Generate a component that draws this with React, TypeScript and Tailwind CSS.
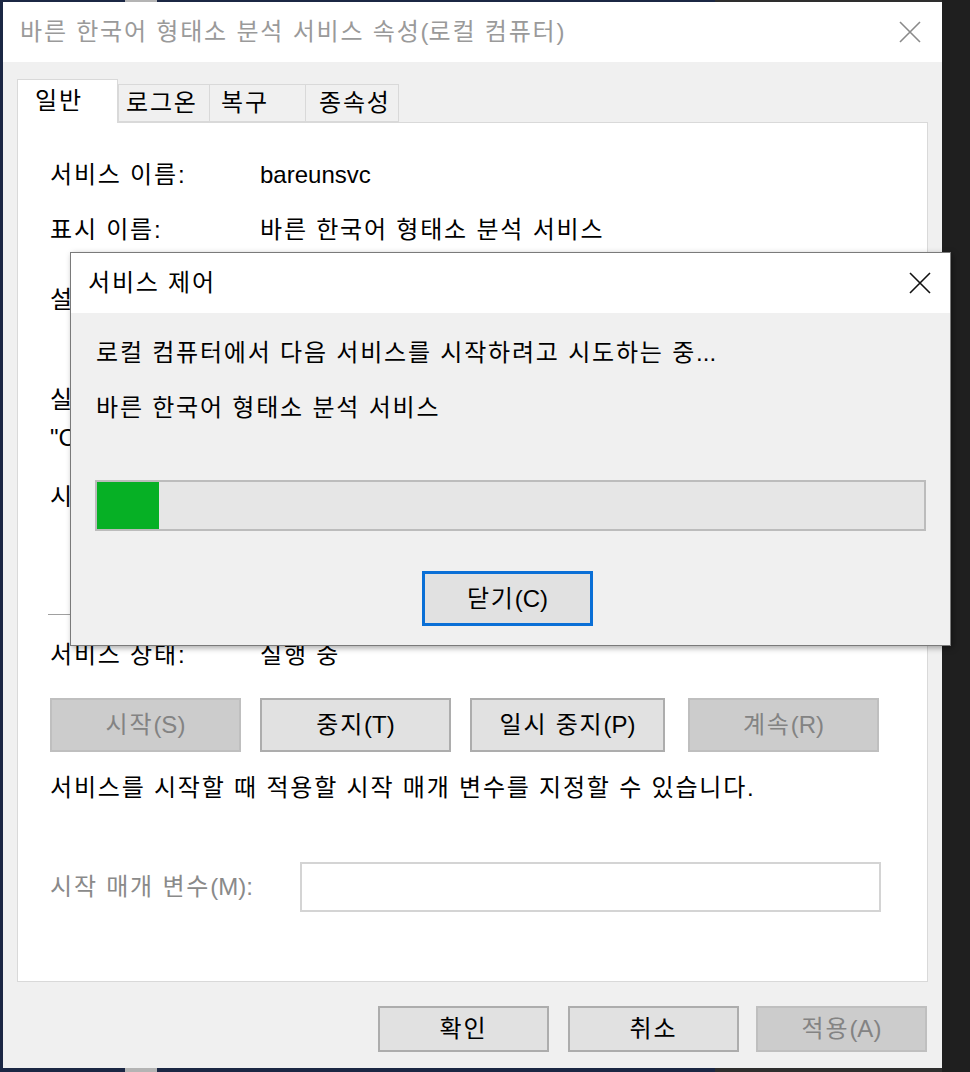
import React from 'react'

const font = { fontFamily: '"Liberation Sans", "Noto Sans CJK KR", sans-serif' }

function CloseIcon({ color }: { color: string }) {
  return (
    <svg width="24" height="24" viewBox="0 0 24 24" fill="none" stroke={color} strokeWidth="1.6">
      <path d="M2 2 L22 22 M22 2 L2 22" />
    </svg>
  )
}

// latin bits keep normal spacing; hangul gets wider tracking like Malgun Gothic
function L({ children }: { children: React.ReactNode }) {
  return <span className="tracking-normal">{children}</span>
}

function Btn({ label, w, disabled, focused }: { label: React.ReactNode; w: string; disabled?: boolean; focused?: boolean }) {
  const base = 'flex items-center justify-center leading-none '
  if (disabled) {
    return <div className={base + w + ' h-full bg-[#cccccc] border-2 border-[#bfbfbf] text-[#838383]'}>{label}</div>
  }
  if (focused) {
    return <div className={base + w + ' h-full bg-[#e1e1e1] border-[3px] border-[#0a6fd6] text-black'}>{label}</div>
  }
  return <div className={base + w + ' h-full bg-[#e1e1e1] border-2 border-[#adadad] text-black'}>{label}</div>
}

function Row({ label, value, className }: { label: React.ReactNode; value: React.ReactNode; className?: string }) {
  return (
    <div className={'flex h-[30px] items-center ' + (className ?? '')}>
      <div className="w-[210px] shrink-0">{label}</div>
      <div>{value}</div>
    </div>
  )
}

export default function App() {
  return (
    <div className="flex w-[970px] h-[1072px] overflow-hidden bg-[#1b2744] pl-[3px] text-[24px] tracking-[1.8px] text-black relative" style={font}>
      <div className="pt-[2px] pb-[4px] w-[939px] shrink-0 bg-[linear-gradient(to_right,#1b2744_122px,#b4b4b4_122px,#b4b4b4_154px,#1b2744_154px,#1b2744_712px,#2e2e2e_712px)]">
        <div className="flex flex-col h-full w-full bg-[#f0f0f0]">
          {/* title bar */}
          <div className="h-[60px] bg-white flex items-center justify-between pl-[17px] pr-[20px] text-[#9a9a9a]">
            <span>바른 한국어 형태소 분석 서비스 속성<L>(</L>로컬 컴퓨터<L>)</L></span>
            <CloseIcon color="#8a8a8a" />
          </div>

          <div className="flex flex-col flex-1 px-[14px] pt-[17px] pb-[16px]">
            {/* tabs */}
            <div className="flex items-end h-[43px]">
              <div className="h-[44px] w-[101px] bg-white border border-b-0 border-[#d9d9d9] pl-[17px] pt-[3px] relative z-10 -mb-px">일반</div>
              <div className="h-[38px] w-[92px] border border-[#d9d9d9] pl-[7px] flex items-center">로그온</div>
              <div className="h-[38px] w-[96px] border border-l-0 border-[#d9d9d9] pl-[11px] flex items-center">복구</div>
              <div className="h-[38px] w-[93px] border border-l-0 border-[#d9d9d9] pl-[13px] flex items-center">종속성</div>
            </div>

            {/* panel */}
            <div className="h-[860px] bg-white border border-[#d9d9d9] flex flex-col pl-[32px] pr-[41px]">
              <Row label={<>서비스 이름<L>:</L></>} value={<L>bareunsvc</L>} className="mt-[37px]" />
              <Row label={<>표시 이름<L>:</L></>} value="바른 한국어 형태소 분석 서비스" className="mt-[25px]" />
              <Row label={<>설명<L>:</L></>} value="바른 한국어 형태소 분석 서비스" className="mt-[40px]" />
              <div className="h-[30px] flex items-center mt-[70px]">실행 파일 경로<L>:</L></div>
              <div className="h-[30px] flex items-center mt-[8px]"><L>"C:\Program Files\Bareun\bin\bareun.exe"</L></div>
              <Row label={<>시작 유형<L>:</L></>} value="자동" className="mt-[29px]" />
              <div className="h-px bg-[#a0a0a0] mt-[102px] -ml-[2px]" />
              <Row label={<>서비스 상태<L>:</L></>} value="실행 중" className="mt-[25px]" />

              <div className="flex h-[54px] mt-[28px]">
                <Btn label={<>시작<L>(S)</L></>} w="w-[191px]" disabled />
                <div className="w-[19px]" />
                <Btn label={<>중지<L>(T)</L></>} w="w-[191px]" />
                <div className="w-[19px]" />
                <Btn label={<>일시 중지<L>(P)</L></>} w="w-[195px]" />
                <div className="w-[23px]" />
                <Btn label={<>계속<L>(R)</L></>} w="w-[191px]" disabled />
              </div>

              <div className="h-[30px] flex items-center mt-[21px]">서비스를 시작할 때 적용할 시작 매개 변수를 지정할 수 있습니다<L>.</L></div>

              <div className="flex items-center h-[50px] mt-[59px]">
                <div className="w-[250px] shrink-0 text-[#8a8a8a]">시작 매개 변수<L>(M):</L></div>
                <div className="w-[581px] h-full bg-white border-2 border-[#d4d4d4]" />
              </div>
            </div>

            {/* bottom buttons */}
            <div className="flex justify-end h-[46px] mt-[24px] pr-px">
              <Btn label="확인" w="w-[171px]" />
              <div className="w-[19px]" />
              <Btn label="취소" w="w-[171px]" />
              <div className="w-[17px]" />
              <Btn label={<>적용<L>(A)</L></>} w="w-[171px]" disabled />
            </div>
          </div>
        </div>
      </div>
      <div className="flex-1 bg-[#1f1f1f]" />

      {/* service control dialog */}
      <div className="absolute left-[70px] top-[252px] w-[881px] h-[394px] border border-[#7a7a7a] bg-[#f0f0f0] flex flex-col shadow-[2px_2px_6px_rgba(0,0,0,0.35)]">
        <div className="h-[60px] bg-white flex items-center justify-between pl-[17px] pr-[18px]">
          <span>서비스 제어</span>
          <CloseIcon color="#111111" />
        </div>
        <div className="flex flex-col flex-1 px-[24px]">
          <div className="h-[30px] flex items-center mt-[25px] pl-px">로컬 컴퓨터에서 다음 서비스를 시작하려고 시도하는 중<L>...</L></div>
          <div className="h-[30px] flex items-center mt-[25px] pl-px">바른 한국어 형태소 분석 서비스</div>
          <div className="h-[51px] mt-[57px] border-2 border-[#bcbcbc] bg-[#e6e6e6] flex">
            <div className="w-[62px] h-full bg-[#06b025]" />
          </div>
          <div className="flex justify-center h-[55px] mt-[40px] pr-[6px]">
            <Btn label={<>닫기<L>(C)</L></>} w="w-[171px]" focused />
          </div>
        </div>
      </div>
    </div>
  )
}
